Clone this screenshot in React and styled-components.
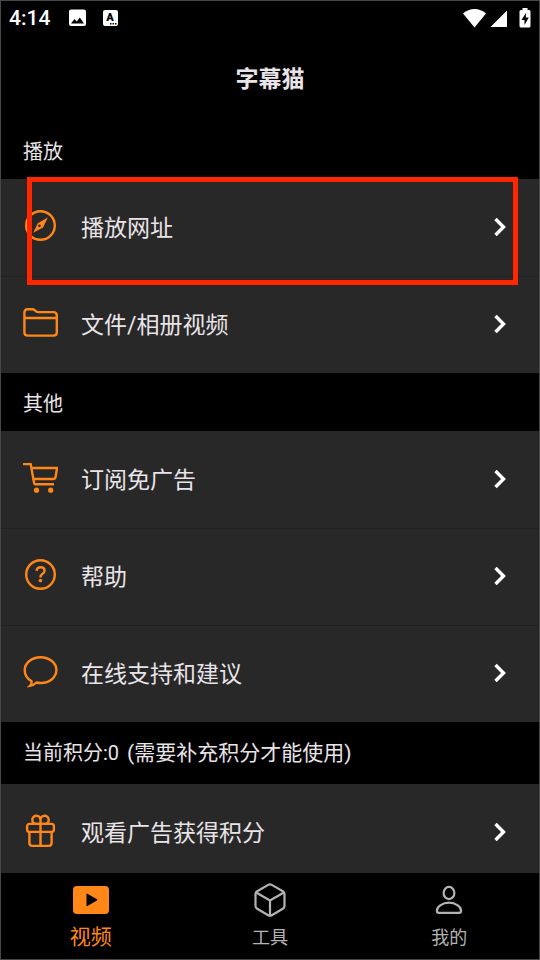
import React, { useState } from "react";
import styled, { createGlobalStyle } from "styled-components";

const ORANGE = "#ff8717";

const SECTIONS = [
  {
    title: "播放",
    highlighted: true,
    rows: [
      { label: "播放网址", icon: "compass" },
      { label: "文件/相册视频", icon: "folder" },
    ],
  },
  {
    title: "其他",
    rows: [
      { label: "订阅免广告", icon: "cart" },
      { label: "帮助", icon: "help" },
      { label: "在线支持和建议", icon: "chat" },
    ],
  },
  {
    title: "当前积分:0",
    note: "(需要补充积分才能使用)",
    rows: [{ label: "观看广告获得积分", icon: "gift" }],
  },
];

const TABS = [
  { label: "视频", icon: "video" },
  { label: "工具", icon: "cube" },
  { label: "我的", icon: "person" },
];

const rowIcons = {
  compass: (
    <>
      <circle cx="18.5" cy="17.5" r="14.3" />
      <path
        d="M25.8 9.6 15.8 15.2 11.2 24.8 21.1 19.4Z M18 16.6a1.3 1.3 0 1 0 .1 2.300 1.300 1.300 0 0 0-.1-2.300Z"
        fill={ORANGE}
        fillRule="evenodd"
        stroke="none"
      />
    </>
  ),
  folder: (
    <>
      <path d="M2.4 27.6V7.4q0-3.2 3.2-3.2h4.6q1.6 0 2.7 1.1l.9.8q1.1 1 2.6 1h15q3.4 0 3.4 3.4v17.1q0 3-3.2 3h-26q-3.2 0-3.2-3Z" />
      <path d="M2.4 13h32.4" />
    </>
  ),
  cart: (
    <>
      <path d="M1 4.1h7.7L12 22.4q.4 1.9 2 1.9h18" />
      <path d="M9.5 8h25.6l-1.5 8.8q-.4 2.2-2.4 2.2H11.4" />
      <circle cx="14.5" cy="30.2" r="2.6" fill={ORANGE} stroke="none" />
      <circle cx="28.7" cy="30.2" r="2.6" fill={ORANGE} stroke="none" />
    </>
  ),
  help: (
    <>
      <circle cx="18.5" cy="17.5" r="14.3" />
      <path d="M14.6 13.9q.2-3.600 4-3.600 4 0 4 3.300 0 1.900-2 3.100-2.200 1.400-2.200 3.700" />
      <circle cx="18.4" cy="23.6" r="1.8" fill={ORANGE} stroke="none" />
    </>
  ),
  chat: (
    <path d="M9.6 27.200C5.300 24.800 2.700 20.800 2.700 16.200 2.700 9 9.700 3.200 18.600 3.200S34.400 9 34.400 16.100 27.800 29 18.900 29q-2.400 0-4.500-.5Q11.600 31.400 8 31.900q2-2 1.600-4.700Z" />
  ),
  gift: (
    <>
      <rect x="5.1" y="10.9" width="26.8" height="8" rx="2.4" />
      <path d="M7.4 18.9V30q0 2.9 2.9 2.9h16.4q2.9 0 2.9-2.9V18.9M18.5 10.9v22" />
      <path d="M18.5 10.9H14a4.1 4.1 0 1 1 4.5-4.1ZM18.5 10.9H23a4.1 4.1 0 1 0-4.5-4.1Z" />
    </>
  ),
};

const tabIcons = {
  video: (
    <>
      <rect y="4" width="36" height="28" rx="4" fill={ORANGE} stroke="none" />
      <path d="M13.5 12.2q0-1 .9-.5l9.6 5.6q.8.6 0 1.2l-9.6 5.6q-.9.5-.9-.5Z" fill="#000" stroke="none" />
    </>
  ),
  cube: (
    <>
      <path d="M16.2 2.9q1.8-1 3.6 0l11 6.3q1.7 1 1.7 2.9v11.7q0 2-1.7 3l-11 6.4q-1.8 1-3.6 0l-11-6.4q-1.7-1-1.7-3V12.1q0-1.9 1.7-2.9Z" />
      <path d="m4.1 10.5 13.9 8 13.9-8M18 18.5v15" />
    </>
  ),
  person: (
    <>
      <ellipse cx="18" cy="11" rx="5.400" ry="6.100" />
      <path d="M18 20.7c-6.3 0-12.1 4-12.1 8q0 2.200 2.200 2.200h19.800q2.200 0 2.200-2.200c0-4-5.800-8-12.100-8Z" />
    </>
  ),
};

const StatusIcons = () => (
  <svg width="50" height="18" viewBox="0 0 50 18" fill="#fff" aria-hidden="true">
    <path
      fillRule="evenodd"
      d="M2 .5h13q2 0 2 2v12.500q0 2-2 2H2q-2 0-2-2V2.500q0-2 2-2ZM2 14.500h13l-4.200-6-3 4-2.300-2.500Z"
    />
    <rect x="34" y="1" width="15" height="16" rx="2" />
    <text x="41" y="12" fill="#000" fontSize="11" fontWeight="900" textAnchor="middle">
      A
    </text>
    <path d="M41 14h1.500v1.500H41ZM43.500 14H45v1.500h-1.500ZM46 14h1.500v1.500H46Z" fill="#000" />
  </svg>
);

const SignalIcons = () => (
  <svg width="68" height="20" viewBox="0 0 68 20" fill="#fff" aria-hidden="true">
    <path d="M0 5.500Q5 1 11.500 1T23 5.500L11.500 19.500Z" />
    <path d="M44 2.500V19H27.500Z" />
    <path d="M59.500 0h5v2H66q1.500 0 1.500 1.500V18q0 1.500-1.500 1.500h-8q-1.500 0-1.500-1.500V3.500Q56.500 2 58 2h1.500Z" />
    <path d="m63 5-4.500 7h3v5l4.300-7.500h-3Z" fill="#000" />
  </svg>
);

const App = () => {
  const [activeTab, setActiveTab] = useState("视频");

  return (
    <Screen>
      <GlobalStyle />
      <StatusBar>
        <StatusGroup>
          <Time>4:14</Time>
          <StatusIcons />
        </StatusGroup>
        <SignalIcons />
      </StatusBar>
      <Header>
        <Title>字幕猫</Title>
      </Header>
      <Content>
        {SECTIONS.map((section) => (
          <section key={section.title}>
            <SectionTitle $tall={!!section.note}>
              {section.title}
              {section.note && <Note>{section.note}</Note>}
            </SectionTitle>
            <Panel>
              {section.rows.map((row) => (
                <Row key={row.label} type="button">
                  <RowIcon viewBox="0 0 36 36" aria-hidden="true">
                    {rowIcons[row.icon]}
                  </RowIcon>
                  <RowLabel>{row.label}</RowLabel>
                  <Chevron viewBox="0 0 14 20" aria-hidden="true">
                    <path d="m2.500 2 8 8-8 8" />
                  </Chevron>
                </Row>
              ))}
              {section.highlighted && <Highlight />}
            </Panel>
          </section>
        ))}
      </Content>
      <TabBar>
        {TABS.map((tab) => (
          <Tab
            key={tab.label}
            type="button"
            $active={activeTab === tab.label}
            onClick={() => setActiveTab(tab.label)}
          >
            <TabIcon viewBox="0 0 36 36" aria-hidden="true">
              {tabIcons[tab.icon]}
            </TabIcon>
            <TabLabel $active={activeTab === tab.label}>{tab.label}</TabLabel>
          </Tab>
        ))}
      </TabBar>
    </Screen>
  );
};

const GlobalStyle = createGlobalStyle`
  * {
    box-sizing: border-box;
  }

  body {
    margin: 0;
    background: #000000;
    font-family: Roboto, "Noto Sans CJK SC", sans-serif;
    color: #e9e4e8;
  }

  button {
    border: none;
    padding: 0;
    background: none;
    font-family: inherit;
    color: inherit;
    cursor: pointer;
  }
`;

const Screen = styled.div`
  display: flex;
  flex-direction: column;
  height: 100vh;
  border: 1px solid #484848;
  background: #000000;
`;

const StatusBar = styled.div`
  display: flex;
  flex-shrink: 0;
  align-items: center;
  justify-content: space-between;
  height: 34px;
  padding: 0 8px;
`;

const StatusGroup = styled.div`
  display: flex;
  align-items: center;
  gap: 19px;
`;

const Time = styled.span`
  font-size: 21px;
  font-weight: 500;
  line-height: 24px;
  color: #ffffff;
`;

const Header = styled.header`
  display: flex;
  flex-shrink: 0;
  align-items: center;
  justify-content: center;
  height: 86px;
  padding-top: 4px;
`;

const Title = styled.h1`
  margin: 0;
  font-size: 23px;
  font-weight: 700;
  line-height: 32px;
`;

const Content = styled.main`
  flex: 1;
  min-height: 0;
  overflow-y: auto;
  scrollbar-width: none;
`;

const SectionTitle = styled.h2`
  display: flex;
  align-items: center;
  gap: 8px;
  height: ${(props) => (props.$tall ? "62px" : "58px")};
  margin: 0;
  padding: ${(props) => (props.$tall ? "0 22px" : "3px 22px 0")};
  font-size: 20px;
  font-weight: 400;
  line-height: 28px;
`;

const Note = styled.span`
  font-size: 21px;
`;

const Panel = styled.div`
  position: relative;
  background: #282828;
`;

const Row = styled.button`
  display: flex;
  align-items: center;
  width: 100%;
  height: 97px;
  padding: 0 32px 0 21px;

  & + & {
    border-top: 1px solid #202020;
  }
`;

const RowIcon = styled.svg`
  flex-shrink: 0;
  width: 36px;
  height: 36px;
  margin-bottom: 4px;
  fill: none;
  stroke: ${ORANGE};
  stroke-width: 2.4;
`;

const RowLabel = styled.span`
  flex: 1;
  padding: 2px 0 0 23px;
  font-size: 23px;
  line-height: 32px;
  text-align: left;
`;

const Chevron = styled.svg`
  width: 14px;
  height: 20px;
  margin-bottom: 2px;
  fill: none;
  stroke: #ffffff;
  stroke-width: 3.4;
`;

const Highlight = styled.div`
  position: absolute;
  top: -2px;
  right: 21px;
  left: 26px;
  height: 108px;
  border: 5px solid #ff2600;
  pointer-events: none;
`;

const TabBar = styled.nav`
  display: flex;
  flex-shrink: 0;
  height: 86px;
  background: #000000;
`;

const Tab = styled.button`
  display: flex;
  flex: 1;
  flex-direction: column;
  align-items: center;
  padding-top: 9px;

  && {
    color: ${(props) => (props.$active ? ORANGE : "#b4b4b4")};
  }
`;

const TabIcon = styled.svg`
  width: 36px;
  height: 36px;
  fill: none;
  stroke: #b4b4b4;
  stroke-width: 2.2;
`;

const TabLabel = styled.span`
  font-size: ${(props) => (props.$active ? "21px" : "18px")};
  line-height: ${(props) => (props.$active ? "38px" : "40px")};
`;

export default App;
